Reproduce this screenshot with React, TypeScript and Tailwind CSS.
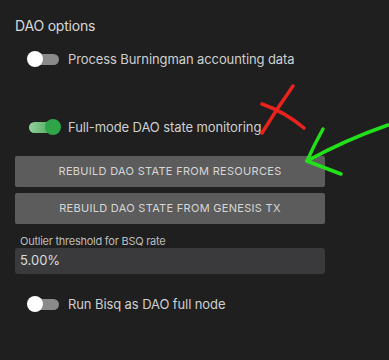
import React from "react";

const Toggle: React.FC<{ on?: boolean; label: string }> = ({ on, label }) => {
  return (
    <div className="flex items-center h-4 pl-[12px]">
      <div className="relative w-[34px] h-4 flex items-center">
        {on ? (
          <>
            <div className="ml-[2px] w-[30px] h-[11px] rounded-full bg-gradient-to-r from-[#8fd29c] to-[#3a9d4f]" />
            <div className="absolute right-0 top-0 w-4 h-4 rounded-full bg-[#2ea548]" />
          </>
        ) : (
          <>
            <div className="ml-[3px] w-[29px] h-[11px] rounded-full bg-[#8a8a8a]" />
            <div className="absolute left-0 top-0 w-4 h-4 rounded-full bg-white" />
          </>
        )}
      </div>
      <span className="ml-[7px] text-[13px] leading-4 tracking-[-0.1px] text-[#cfcfcf]">{label}</span>
    </div>
  );
};

export default function App() {
  return (
    <div className="relative w-[389px] h-[360px] bg-[#1f1f1f] font-['Inter',sans-serif] overflow-hidden">
      <div className="pt-[17px] px-[15px] flex flex-col">
        <h2 className="text-[14px] leading-[17px] tracking-[-0.2px] text-[#d9d9d9]">DAO options</h2>
        <div className="mt-[17px]">
          <Toggle label="Process Burningman accounting data" />
        </div>
        <div className="mt-[52px]">
          <Toggle on label="Full-mode DAO state monitoring" />
        </div>
        <button className="mt-[21px] w-[310px] h-[31px] rounded-[2px] bg-[#5c5c5c] text-[11px] tracking-[0.3px] text-[#d6d6d6]">
          REBUILD DAO STATE FROM RESOURCES
        </button>
        <button className="mt-[6px] w-[310px] h-[31px] rounded-[2px] bg-[#5c5c5c] text-[11px] tracking-[0.3px] text-[#d6d6d6]">
          REBUILD DAO STATE FROM GENESIS TX
        </button>
        <label className="mt-[10px] pl-[5px] text-[11px] leading-[14px] tracking-[-0.25px] text-[#bdbdbd]">
          Outlier threshold for BSQ rate
        </label>
        <div className="w-[310px] h-[26px] rounded-[3px] bg-[#3a3a3c] flex items-center pl-[5px] text-[13px] text-[#dcdcdc]">
          5.00%
        </div>
        <div className="mt-[22px]">
          <Toggle label="Run Bisq as DAO full node" />
        </div>
      </div>
      <svg className="absolute inset-0 pointer-events-none" width="389" height="360" viewBox="0 0 389 360">
        <g stroke="#e8231e" strokeWidth="3.5" strokeLinecap="round" fill="none">
          <path d="M262 133 Q276 110 293 86" />
          <path d="M262 104 Q285 112 304 128" />
        </g>
        <g stroke="#22e01a" strokeWidth="3.5" strokeLinecap="round" fill="none">
          <path d="M388 125 Q345 140 307 161" />
          <path d="M323 129 Q314 145 307 161" />
          <path d="M307 161 Q325 168 341 174" />
        </g>
      </svg>
    </div>
  );
}
